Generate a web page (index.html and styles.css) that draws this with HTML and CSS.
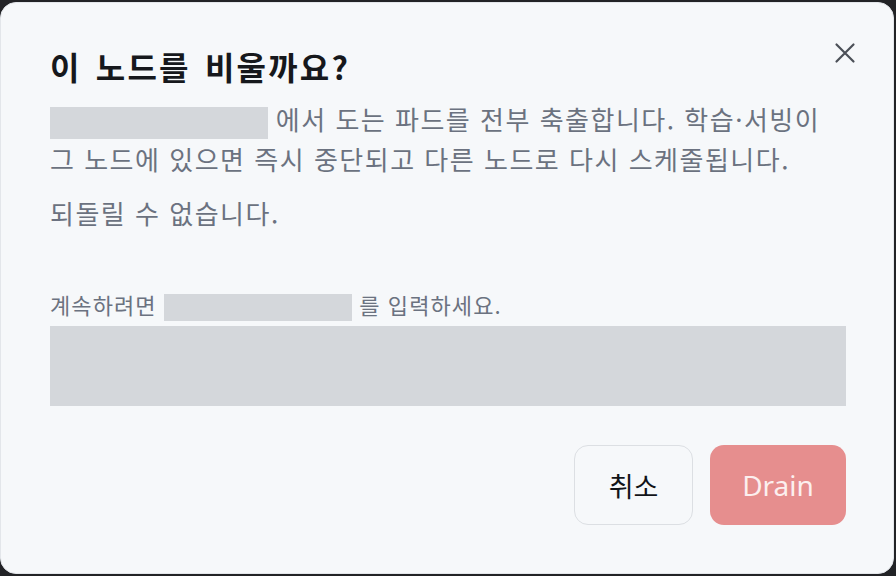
FILE: index.html
```html
<!DOCTYPE html>
<html lang="ko">
<head>
<meta charset="utf-8">
<link rel="stylesheet" href="styles.css">
</head>
<body>
<div class="dialog">
  <button class="close" aria-label="닫기">
    <svg width="22" height="22" viewBox="0 0 22 22"><path d="M2.5 2.5 L19.5 19.5 M19.5 2.5 L2.5 19.5" stroke="#4b4f57" stroke-width="2.2" stroke-linecap="round"/></svg>
  </button>
  <h1 class="title">이 노드를 비울까요?</h1>
  <p class="desc"><span class="redact r1"></span> 에서 도는 파드를 전부 축출합니다. 학습·서빙이 그 노드에 있으면 즉시 중단되고 다른 노드로 다시 스케줄됩니다.</p>
  <p class="desc warn">되돌릴 수 없습니다.</p>
  <label class="label">계속하려면 <span class="redact r2"></span> 를 입력하세요.</label>
  <div class="input"></div>
  <div class="actions">
    <button class="btn cancel">취소</button>
    <button class="btn drain">Drain</button>
  </div>
</div>
</body>
</html>
```
FILE: styles.css
```css
html, body {
  margin: 0;
  padding: 0;
  width: 896px;
  height: 576px;
  background: #222326;
  overflow: hidden;
}
body {
  font-family: "Noto Sans CJK KR", "Noto Sans", sans-serif;
}
.dialog {
  position: relative;
  box-sizing: border-box;
  width: 894px;
  height: 572px;
  margin-top: 2px;
  background: #f6f8fa;
  border: 1px solid #e3e6ea;
  border-radius: 16px;
  padding: 39px 49px 0 49px;
}
.close {
  position: absolute;
  top: 39px;
  right: 37px;
  width: 22px;
  height: 22px;
  padding: 0;
  border: 0;
  background: none;
}
.close svg { display: block; }
.title {
  margin: 0;
  font-size: 32px;
  font-weight: 700;
  line-height: 48px;
  color: #16181c;
  letter-spacing: 2.2px;
  word-spacing: 3px;
}
.desc {
  margin: 9px 0 0 0;
  font-size: 26px;
  line-height: 39px;
  color: #6b7280;
  letter-spacing: 1.5px;
}
.warn {
  margin-top: 15px;
}
.redact {
  display: inline-block;
  background: #d4d7db;
  vertical-align: middle;
}
.r1 {
  width: 218px;
  height: 32px;
  margin-right: -1px;
}
.label {
  display: block;
  margin-top: 56px;
  font-size: 22px;
  line-height: 32px;
  color: #6b7280;
  letter-spacing: 1.1px;
}
.r2 {
  width: 188px;
  height: 27px;
}
.input {
  margin-top: 5px;
  height: 80px;
  width: 796px;
  background: #d4d7db;
}
.actions {
  display: flex;
  justify-content: flex-end;
  gap: 17px;
  margin-top: 39px;
  width: 796px;
}
.btn {
  height: 80px;
  border-radius: 14px;
  font-family: "Noto Sans CJK KR", "Noto Sans", sans-serif;
  padding: 0;
}
.cancel {
  width: 119px;
  font-size: 27px;
  background: #f6f8fa;
  border: 1.5px solid #dcdfe3;
  color: #111318;
}
.drain {
  width: 136px;
  font-size: 28px;
  font-family: "Noto Sans", sans-serif;
  background: #e68e8e;
  border: 0;
  color: #fcefef;
}
```
